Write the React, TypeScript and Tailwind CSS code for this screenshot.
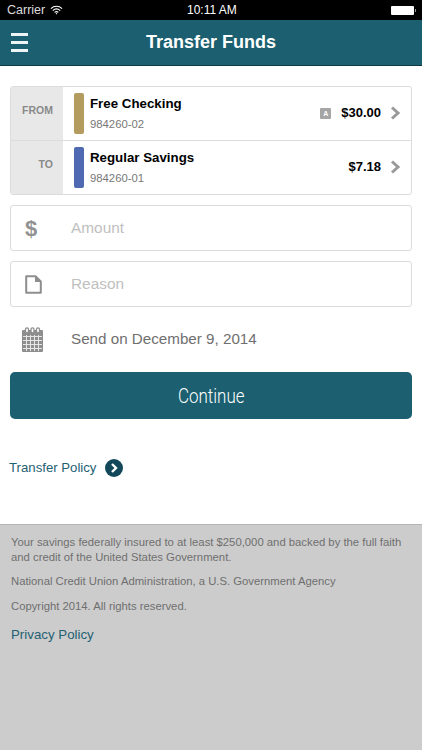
import React from 'react';

const font = "[font-family:'Liberation_Sans',Arial,sans-serif]";

const Chevron = () => (
  <svg width="11" height="14" viewBox="0 0 11 14" fill="none">
    <path d="M2 1.5 L8 7 L2 12.5" stroke="#9a9a9a" strokeWidth="3" />
  </svg>
);

const AccountRow: React.FC<{ label: string; color: string; name: string; num: string; amount: string; badge?: boolean; border?: boolean }> = ({ label, color, name, num, amount, badge, border }) => (
  <div className={`flex ${border ? 'h-[54px] border-b border-[#dcdcdc]' : 'h-[53px]'}`}>
    <div className="w-[52px] shrink-0 bg-[#e8e8e8] flex items-center justify-end pr-[10px] pb-[6px] text-[10.5px] font-bold text-[#8a8a8a]">{label}</div>
    <div className="flex-1 flex items-center pl-[11px] pr-[10px]">
      <div className={`w-[10px] h-[41px] rounded-[2px] ${color}`} />
      <div className="ml-[6px] flex-1 pb-[2px]">
        <div className="text-[13.3px] leading-[18px] font-bold text-black">{name}</div>
        <div className="text-[11.3px] leading-[14px] mt-[4px] text-[#777]">{num}</div>
      </div>
      <div className="flex items-center pb-[1px]">
        {badge && <span className="w-[11px] h-[11px] mr-[10px] rounded-[1px] bg-[#a5a5a5] text-white text-[7px] font-bold leading-[11px] text-center">A</span>}
        <span className="text-[13px] font-bold text-black mr-[9px]">{amount}</span>
        <Chevron />
      </div>
    </div>
  </div>
);

export default function App() {
  return (
    <div className={`${font} w-[422px] h-[750px] flex flex-col bg-white overflow-hidden`}>
      <div className="h-[20px] bg-black text-white flex items-center pl-[7px] pr-[6px] text-[12.5px] relative">
        <span className="text-[#ddd]">Carrier</span>
        <svg className="ml-[5px]" width="13" height="10" viewBox="0 0 14 10" fill="none" stroke="#fff" strokeWidth="1.2">
          <path d="M1 3.5 C4.5 0.2 9.5 0.2 13 3.5" />
          <path d="M3 5.6 C5.5 3.4 8.5 3.4 11 5.6" />
          <path d="M5 7.6 C6.2 6.6 7.8 6.6 9 7.6" />
          <circle cx="7" cy="9" r="0.7" fill="#fff" stroke="none" />
        </svg>
        <span className="absolute left-[187px] top-[3px] leading-[15px] text-[12px]">10:11 AM</span>
        <div className="ml-auto flex items-center">
          <div className="w-[23px] h-[9px] bg-white rounded-[1px]" />
          <div className="w-[1px] h-[3px] ml-[1px] bg-[#999]" />
        </div>
      </div>
      <div className="h-[46px] bg-[#1b5f70] border-b border-[#0d3a45] flex items-center justify-center relative text-white">
        <div className="absolute left-[11px] top-[13px] flex flex-col gap-[5px]">
          <div className="w-[17px] h-[3px] bg-[#eef4f5]" />
          <div className="w-[17px] h-[3px] bg-[#eef4f5]" />
          <div className="w-[17px] h-[3px] bg-[#eef4f5]" />
        </div>
        <span className="text-[18px] font-bold">Transfer Funds</span>
      </div>

      <div className="flex-1 flex flex-col px-[10px] pt-[20px]">
        <div className="border border-[#dcdcdc] rounded-[3px] overflow-hidden">
          <AccountRow label="FROM" color="bg-[#b49c61]" name="Free Checking" num="984260-02" amount="$30.00" badge border />
          <AccountRow label="TO" color="bg-[#4f69b3]" name="Regular Savings" num="984260-01" amount="$7.18" />
        </div>

        <div className="mt-[10px] h-[46px] border border-[#dcdcdc] rounded-[3px] flex items-center">
          <span className="w-[40px] text-center text-[22px] font-bold text-[#929292]">$</span>
          <span className="ml-[20px] text-[15.4px] text-[#c0c0c0] pb-[1px]">Amount</span>
        </div>
        <div className="mt-[10px] h-[46px] border border-[#dcdcdc] rounded-[3px] flex items-center">
          <div className="w-[44px] flex justify-center">
            <svg width="17" height="19" viewBox="0 0 17 19" fill="none">
              <path d="M1.2 1.2 H10.5 L15.8 6.5 V17.8 H1.2 Z" stroke="#8e8e8e" strokeWidth="2" strokeLinejoin="round" />
              <path d="M10 1 V7 H16 Z" fill="#8e8e8e" />
            </svg>
          </div>
          <span className="ml-[16px] text-[15.4px] text-[#c0c0c0]">Reason</span>
        </div>
        <div className="mt-[10px] h-[44px] flex items-center">
          <div className="w-[44px] flex justify-center">
            <svg width="21" height="25" viewBox="0 0 21 25" fill="none">
              <rect x="0" y="3" width="21" height="22" rx="1" fill="#8e8e8e" />
              <g stroke="#e6e6e6" strokeWidth="1">
                <path d="M1 9.5 H20 M1 13.5 H20 M1 17.5 H20 M1 21.5 H20 M4.5 8 V24 M8.5 8 V24 M12.5 8 V24 M16.5 8 V24" />
              </g>
              <g stroke="#8e8e8e" strokeWidth="1.3" fill="#fff">
                <rect x="3.5" y="0.8" width="3" height="5" rx="1.5" />
                <rect x="9" y="0.8" width="3" height="5" rx="1.5" />
                <rect x="14.5" y="0.8" width="3" height="5" rx="1.5" />
              </g>
            </svg>
          </div>
          <span className="ml-[17px] text-[15.2px] text-[#6f6f6f]">Send on December 9, 2014</span>
        </div>

        <div className="mt-[11px] h-[47px] rounded-[5px] bg-[#1b5f70] flex items-center justify-center text-white text-[20px] font-['Roboto',sans-serif] font-light">
          <span className="inline-block scale-x-[0.85]">Continue</span>
        </div>

        <div className="mt-[39px] flex items-center -ml-[1px]">
          <span className="text-[13.2px] text-[#1f6173]">Transfer Policy</span>
          <svg className="ml-[9px]" width="18" height="18" viewBox="0 0 18 18">
            <circle cx="9" cy="9" r="9" fill="#12485a" />
            <path d="M7 5 L11 9 L7 13" stroke="#fff" strokeWidth="2.4" fill="none" />
          </svg>
        </div>
      </div>

      <div className="h-[226px] shrink-0 bg-[#cccccc] border-t border-[#b5b5b5] px-[11px] pt-[10px] text-[11.3px] leading-[14.5px] text-[#6f6f6f]">
        <p>Your savings federally insured to at least $250,000 and backed by the full faith and credit of the United States Government.</p>
        <p className="mt-[10px]">National Credit Union Administration, a U.S. Government Agency</p>
        <p className="mt-[10px]">Copyright 2014. All rights reserved.</p>
        <p className="mt-[13px] text-[13.3px] leading-[18px] text-[#1f6173]">Privacy Policy</p>
      </div>
    </div>
  );
}
